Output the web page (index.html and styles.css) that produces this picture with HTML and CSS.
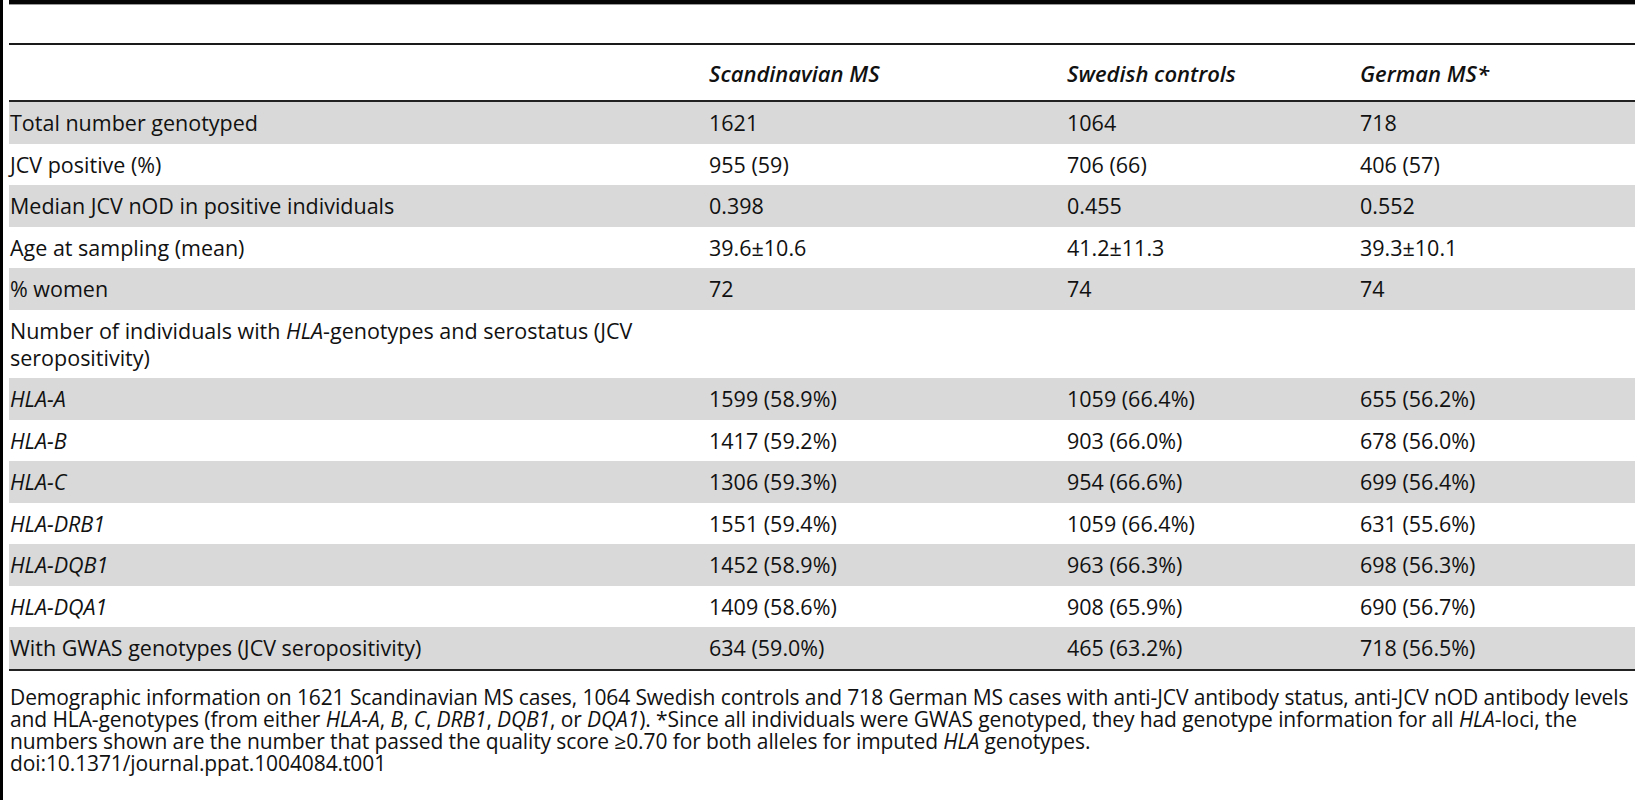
FILE: index.html
```
<!DOCTYPE html>
<html lang="en">
<head>
    <meta charset="UTF-8">
    <title>Table 1 - Demographic information</title>
    <link rel="stylesheet" href="styles.css">
</head>
<body>

    <div class="page">
        <div class="table-top"></div>

        <table class="data">
            <colgroup>
                <col class="c-label">
                <col class="c-scan">
                <col class="c-swe">
                <col class="c-ger">
            </colgroup>
            <thead>
                <tr>
                    <th></th>
                    <th>Scandinavian MS</th>
                    <th>Swedish controls</th>
                    <th>German MS*</th>
                </tr>
            </thead>
            <tbody>
                <tr class="shade"><td>Total number genotyped</td><td>1621</td><td>1064</td><td>718</td></tr>
                <tr><td>JCV positive (%)</td><td>955 (59)</td><td>706 (66)</td><td>406 (57)</td></tr>
                <tr class="shade"><td>Median JCV nOD in positive individuals</td><td>0.398</td><td>0.455</td><td>0.552</td></tr>
                <tr><td>Age at sampling (mean)</td><td>39.6&plusmn;10.6</td><td>41.2&plusmn;11.3</td><td>39.3&plusmn;10.1</td></tr>
                <tr class="shade"><td>% women</td><td>72</td><td>74</td><td>74</td></tr>
                <!-- HLA block -->
                <tr><td>Number of individuals with <i>HLA</i>-genotypes and serostatus (JCV<br>seropositivity)</td><td></td><td></td><td></td></tr>
                <tr class="shade"><td><i>HLA-A</i></td><td>1599 (58.9%)</td><td>1059 (66.4%)</td><td>655 (56.2%)</td></tr>
                <tr><td><i>HLA-B</i></td><td>1417 (59.2%)</td><td>903 (66.0%)</td><td>678 (56.0%)</td></tr>
                <tr class="shade"><td><i>HLA-C</i></td><td>1306 (59.3%)</td><td>954 (66.6%)</td><td>699 (56.4%)</td></tr>
                <tr><td><i>HLA-DRB1</i></td><td>1551 (59.4%)</td><td>1059 (66.4%)</td><td>631 (55.6%)</td></tr>
                <tr class="shade"><td><i>HLA-DQB1</i></td><td>1452 (58.9%)</td><td>963 (66.3%)</td><td>698 (56.3%)</td></tr>
                <tr><td><i>HLA-DQA1</i></td><td>1409 (58.6%)</td><td>908 (65.9%)</td><td>690 (56.7%)</td></tr>
                <tr class="shade"><td>With GWAS genotypes (JCV seropositivity)</td><td>634 (59.0%)</td><td>465 (63.2%)</td><td>718 (56.5%)</td></tr>
            </tbody>
        </table>

        <!-- footnote -->
        <p class="caption">
            <span>Demographic information on 1621 Scandinavian MS cases, 1064 Swedish controls and 718 German MS cases with anti-JCV antibody status, anti-JCV nOD antibody levels</span>
            <span>and HLA-genotypes (from either <i>HLA-A</i>, <i>B</i>, <i>C</i>, <i>DRB1</i>, <i>DQB1</i>, or <i>DQA1</i>). *Since all individuals were GWAS genotyped, they had genotype information for all <i>HLA</i>-loci, the</span>
            <span>numbers shown are the number that passed the quality score &ge;0.70 for both alleles for imputed <i>HLA</i> genotypes.</span>
            <span>doi:10.1371/journal.ppat.1004084.t001</span>
        </p>
    </div>

</body>
</html>
```

FILE: styles.css
```
html, body {
    margin: 0;
    padding: 0;
    background-color: #ffffff;
    overflow: hidden;
}

body {
    color: #111111;
    font-family: "Open Sans", "Liberation Sans", sans-serif;
    font-size: 21.5px;
}

/* left rule of the page */
.page {
    border-left: 3px solid #000000;
    padding-left: 6px;
    height: 800px;
    box-sizing: border-box;
}

.table-top {
    border-top: 4px solid #050505;
    border-bottom: 2px solid #1a1a1a;
    height: 39px;
    box-shadow: inset 0 1px 0 #9a9a9a;
}

/* Table styling */
table.data {
    width: 1626px;
    border-collapse: collapse;
    table-layout: fixed;
}

col.c-label { width: 699px; }
col.c-scan { width: 358px; }
col.c-swe { width: 293px; }

table.data th {
    height: 55px;
    padding: 0 1px;
    text-align: left;
    font-size: 22px;
    font-style: italic;
    font-weight: 600;
    border-bottom: 2px solid #222222;
}

table.data td {
    padding: 7px 1px 7.5px;
    line-height: 27px;
    vertical-align: top;
    white-space: nowrap;
}

table.data tr.shade td {
    background-color: #d9d9d9;
}

table.data tbody tr:last-child td {
    border-bottom: 2px solid #222222;
}

/* footnote */
.caption {
    margin: 15px 0 0;
    padding-left: 1px;
    font-size: 21px;
    line-height: 22px;
    letter-spacing: -0.1px;
    white-space: nowrap;
}

.caption span {
    display: block;
}
```
